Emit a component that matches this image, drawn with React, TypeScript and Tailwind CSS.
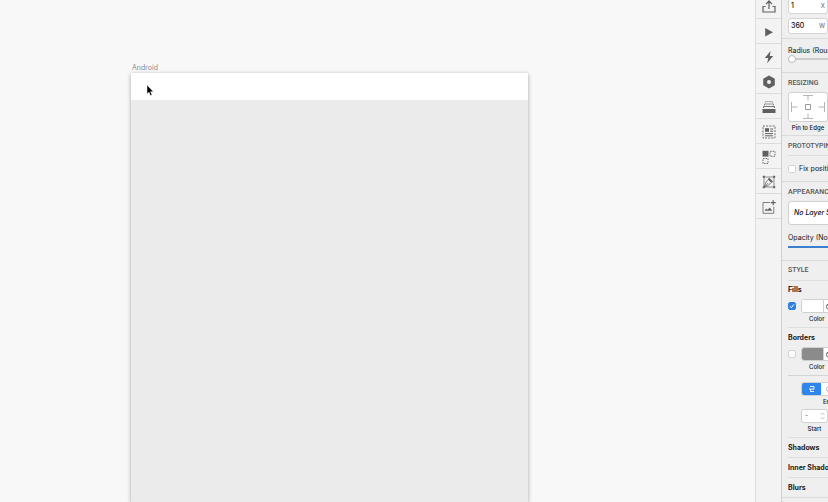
import type { ReactNode } from "react";

const INK = "#606060";

function Share() {
  return (
    <svg width="14" height="16" viewBox="0 0 14 16" fill="none" stroke={INK} strokeWidth="1.2">
      <path d="M7 11V3.5M4 6.2L7 3l3 3.2M3.5 8.5H1V14h12V8.5h-2.5" />
    </svg>
  );
}
function Play() {
  return (
    <svg width="14" height="14" viewBox="0 0 14 14" fill={INK}>
      <path d="M3.2 3v8.6L11 7.3z" />
    </svg>
  );
}
function Bolt() {
  return (
    <svg width="14" height="14" viewBox="0 0 14 14" fill={INK}>
      <path d="M8.6 1L2.8 8h3.4l-1 5.2L11.2 6H7.8z" />
    </svg>
  );
}
function Nut() {
  return (
    <svg width="14" height="14" viewBox="0 0 14 14" fill={INK} fillRule="evenodd">
      <path d="M7 .4l5.8 3.3v6.6L7 13.6 1.2 10.3V3.7zM7 5a2 2 0 1 0 0 4 2 2 0 0 0 0-4z" />
    </svg>
  );
}
function Stack() {
  return (
    <svg width="14" height="14" viewBox="0 0 14 14" fill="none">
      <path d="M3.5 3V1.5h7V3" stroke="#b0b0b0" />
      <path d="M2.5 5.5V4h9v1.5" stroke="#909090" />
      <path d="M1.5 8V6.5h11V8" stroke="#777777" />
      <path d="M.5 9h13v4H.5z" fill={INK} />
    </svg>
  );
}
function Article() {
  return (
    <svg width="14" height="14" viewBox="0 0 14 14" fill="none" stroke={INK}>
      <path d="M1 1h12v12H1z" strokeDasharray="2 1.2" strokeWidth=".9" />
      <path d="M3 3.2h4v3.6H3z" fill={INK} stroke="none" />
      <path d="M8.2 4h3M8.2 6.2h3M3 8.6h8M3 10.8h8" />
    </svg>
  );
}
function Copies() {
  return (
    <svg width="14" height="14" viewBox="0 0 14 14" fill="none" stroke={INK}>
      <path d="M.5 .8h6v5.8h-6z" fill={INK} stroke="none" />
      <path d="M8 1.3h5v5H8zM1 8.5h5v5H1z" strokeDasharray="1.5 1" strokeWidth=".9" />
    </svg>
  );
}
function Vector() {
  return (
    <svg width="14" height="14" viewBox="0 0 14 14" fill="none" stroke={INK}>
      <path d="M2 2h10v10H2z" strokeWidth=".7" />
      <path d="M.8 .8h2v2h-2zM11.2 .8h2v2h-2zM.8 11.2h2v2h-2zM11.2 11.2h2v2h-2z" fill={INK} stroke="none" />
      <path d="M7.2 2.8l3.8 3.6-1.4 1.6-4-3.8z" fill={INK} stroke="none" />
      <path d="M5.6 5.2L3.8 7.4l-1.4 4.4 4.2-1.6 2-2.2M2.4 11.8l3.6-3.6" strokeWidth=".8" />
    </svg>
  );
}
function AddImage() {
  return (
    <svg width="14" height="14" viewBox="0 0 14 14" fill="none" stroke={INK}>
      <path d="M7.8 2.5H1v10.8h10.8V6.8" strokeWidth=".8" />
      <path d="M11.2 .2v5M8.7 2.7h5" strokeWidth="1.2" />
      <path d="M2.6 10.8l1.6-2.2 1.4 1.2L7.8 7.4l2.4 3.4z" fill={INK} stroke="none" />
    </svg>
  );
}

const tools: [string, ReactNode][] = [
  ["Preview", <Play />],
  ["Actions", <Bolt />],
  ["Components", <Nut />],
  ["Layers", <Stack />],
  ["Content", <Article />],
  ["Duplicate", <Copies />],
  ["Edit vector", <Vector />],
  ["Add image", <AddImage />],
];

function Field({ label, value, unit }: { label: string; value: string; unit: string }) {
  return (
    <label className="flex h-4 w-10 shrink-0 items-center rounded-[3px] border border-[#d4d4d4] bg-white pr-0.5">
      <input
        aria-label={label}
        defaultValue={value}
        className="min-w-0 flex-1 bg-transparent pl-0.5 text-[7px] font-medium leading-3 text-[#111111] outline-none"
      />
      <span className="text-[6px] font-medium leading-3 text-[#777777]">{unit}</span>
    </label>
  );
}

function Heading({ children }: { children: ReactNode }) {
  return (
    <h2 className="font-[Roboto,sans-serif] text-[7px] font-medium leading-[10px] text-[#555555]">{children}</h2>
  );
}

function Title({ children }: { children: ReactNode }) {
  return <h3 className="text-[7px] font-bold leading-[10px] text-[#222222]">{children}</h3>;
}

function Tick({ label, on = false }: { label: string; on?: boolean }) {
  return (
    <span className="relative flex size-2 shrink-0">
      <input
        type="checkbox"
        aria-label={label}
        defaultChecked={on}
        className="peer size-2 appearance-none rounded-[2px] border border-[#d2d2d2] bg-white checked:border-[#2f7fe0] checked:bg-[#2f7fe0]"
      />
      <svg
        viewBox="0 0 8 8"
        fill="none"
        stroke="white"
        className="pointer-events-none absolute inset-0 hidden size-2 peer-checked:block"
      >
        <path d="M2 4.2l1.4 1.5L6 2.3" />
      </svg>
    </span>
  );
}

function Paint({ name, on, swatch }: { name: string; on?: boolean; swatch: string }) {
  return (
    <>
      <div className="mt-1 flex h-[14px] items-center gap-[5px]">
        <Tick label={name} on={on} />
        <div className="flex h-[14px] w-16 shrink-0 overflow-hidden rounded-[3px] border border-[#d0d0d0] bg-white">
          <button aria-label={name + " color"} className={"w-[22px] border-r border-[#d0d0d0] " + swatch} />
          <button aria-label={name + " options"} className="pl-px">
            <svg width="8" height="8" viewBox="0 0 8 8" fill="none" stroke="#666666">
              <circle cx="4" cy="4.6" r="2.6" />
              <path d="M2.5 3.5L5 1M4 4.6h2" />
            </svg>
          </button>
        </div>
      </div>
      <div className="ml-[21px] mt-px text-[6px] font-medium leading-[10px]">Color</div>
    </>
  );
}

export default function App() {
  return (
    <div className="flex h-screen overflow-hidden bg-[#f8f8f8] font-[Inter,sans-serif] text-[#111111]">
      <main className="flex min-w-0 flex-1 flex-col pl-[131px] pr-[227px] pt-[62px]">
        <div className="pl-px text-[7px] leading-[11px] text-[#8c8c8c]">Android</div>
        <div className="relative flex-1 bg-[#ebebeb] shadow-[0_1px_4px_rgba(0,0,0,0.35)]">
          <div className="h-[27px] bg-white" />
          <svg className="absolute left-[15px] top-[11px]" width="9" height="13" viewBox="0 0 9 13">
            <path
              d="M1 1v9l2-1.8L4.4 11.6l1.6-.7-1.4-3.2h2.8z"
              fill="black"
              stroke="white"
              strokeWidth=".5"
            />
          </svg>
        </div>
      </main>

      <nav aria-label="Tools" className="w-[26px] shrink-0 border-l border-[#dcdcdc] bg-[#f3f3f3]">
        <button aria-label="Export" className="flex h-[19px] w-full items-end justify-center border-b border-[#dcdcdc] pb-1">
          <Share />
        </button>
        {tools.map(([name, icon]) => (
          <button
            key={name}
            aria-label={name}
            className="flex h-[25px] w-full items-center justify-center border-b border-[#dcdcdc] pt-px"
          >
            {icon}
          </button>
        ))}
      </nav>

      <aside className="w-[47px] shrink-0 overflow-hidden whitespace-nowrap border-l border-[#cfcfcf] bg-[#efefef] text-[7px] leading-[10px]">
        <section className="-mt-0.5 flex h-[41px] flex-col gap-1 border-b border-[#dadada] pl-1.5">
          <Field label="X" value="1" unit="X" />
          <Field label="Width" value="360" unit="W" />
        </section>

        <section className="h-[34px] border-b border-[#dadada] pl-1.5 pt-[7px]">
          <label htmlFor="radius" className="block">
            Radius (Round Corners)
          </label>
          <input
            id="radius"
            type="range"
            defaultValue={0}
            className="-mt-px block h-2 w-[120px] appearance-none bg-transparent [&::-webkit-slider-runnable-track]:h-0.5 [&::-webkit-slider-runnable-track]:bg-[#cccccc] [&::-webkit-slider-thumb]:-mt-[3px] [&::-webkit-slider-thumb]:size-2 [&::-webkit-slider-thumb]:appearance-none [&::-webkit-slider-thumb]:rounded-full [&::-webkit-slider-thumb]:border [&::-webkit-slider-thumb]:border-[#bbbbbb] [&::-webkit-slider-thumb]:bg-white"
          />
        </section>

        <section className="h-[63px] border-b border-[#dadada] pl-1.5 pt-[5px]">
          <Heading>RESIZING</Heading>
          <button aria-label="Pin to Edge" className="mt-1 flex h-[30px] w-10 items-center justify-center rounded-[3px] border border-[#d0d0d0] bg-white">
            <svg width="36" height="26" viewBox="0 0 36 26" fill="none" stroke="#b5b5b5">
              <path d="M13 1.5h10M18 1.5v5M13 24.5h10M18 24.5v-5M1.5 8v10M1.5 13h6M34.5 8v10M34.5 13h-6" />
              <path d="M15.5 10.5h5v5h-5z" stroke="#999999" />
            </svg>
          </button>
          <div className="mt-px w-10 text-center text-[6px] font-medium leading-[10px]">Pin to Edge</div>
        </section>

        <section className="h-[46px] border-b border-[#dadada] pl-1.5 pt-[5px]">
          <Heading>PROTOTYPING</Heading>
          <label className="mt-1 flex items-center gap-[3px] border-t border-[#dedede] pt-2">
            <Tick label="Fix position when scrolling" />
            Fix position when scrolling
          </label>
        </section>

        <section className="h-[79px] border-b border-[#dadada] pl-1.5 pt-[5px]">
          <Heading>APPEARANCE</Heading>
          <button className="mt-1 flex h-6 w-[120px] items-center rounded-[3px] border border-[#d0d0d0] bg-white pl-[5px] font-medium italic">
            No Layer Style
          </button>
          <div className="mt-2">Opacity (Normal)</div>
          <div className="mt-[3px] h-0.5 w-[120px] bg-[#3b7fcf]" />
        </section>

        <section className="border-b border-[#dadada] pl-1.5 pt-1">
          <Heading>STYLE</Heading>
          <div className="mt-[5px] h-[47px] border-t border-[#dedede] pt-1">
            <Title>Fills</Title>
            <Paint name="Fill" on swatch="bg-white" />
          </div>
          <div className="h-12 border-t border-[#dedede] pt-[5px]">
            <Title>Borders</Title>
            <Paint name="Border" swatch="bg-[#8b8b8b]" />
          </div>
          <div className="h-[62px] border-t border-[#d4d4d4] pl-[13px] pt-1.5 text-[6px] font-medium">
            <div className="flex h-[14px] w-16 overflow-hidden rounded-[3px] border border-[#d0d0d0] bg-white">
              <button aria-label="Butt ends" className="flex w-[19px] items-center justify-center bg-[#2f86ea]">
                <svg width="8" height="8" viewBox="0 0 8 8" fill="none" stroke="white">
                  <path d="M2 1.5h4v2.7H2.5v2.3H6M1 4h2" strokeWidth=".9" />
                </svg>
              </button>
              <button aria-label="Round ends" className="pl-1">
                <svg width="8" height="8" viewBox="0 0 8 8" fill="none" stroke="#bbbbbb">
                  <circle cx="4" cy="4" r="2.5" />
                </svg>
              </button>
            </div>
            <div className="pl-[22px] pt-px">Ends</div>
            <div className="relative mt-0.5 h-[14px] w-[27px]">
              <select
                id="start"
                className="h-[14px] w-[27px] appearance-none rounded-[3px] border border-[#d0d0d0] bg-white pl-[3px] text-[7px] leading-3 text-[#888888]"
              >
                <option>-</option>
              </select>
              <svg
                className="pointer-events-none absolute right-[3px] top-[3px]"
                width="5"
                height="8"
                viewBox="0 0 5 8"
                fill="none"
                stroke="#b0b0b0"
                strokeWidth=".8"
              >
                <path d="M.8 2.8L2.5 1l1.7 1.8M.8 5.2L2.5 7l1.7-1.8" />
              </svg>
            </div>
            <label htmlFor="start" className="block w-[27px] pt-px text-center">
              Start
            </label>
          </div>
          {["Shadows", "Inner Shadows", "Blurs"].map((name) => (
            <div key={name} className="h-5 border-t border-[#dedede] pt-[5px]">
              <Title>{name}</Title>
            </div>
          ))}
        </section>
      </aside>
    </div>
  );
}
